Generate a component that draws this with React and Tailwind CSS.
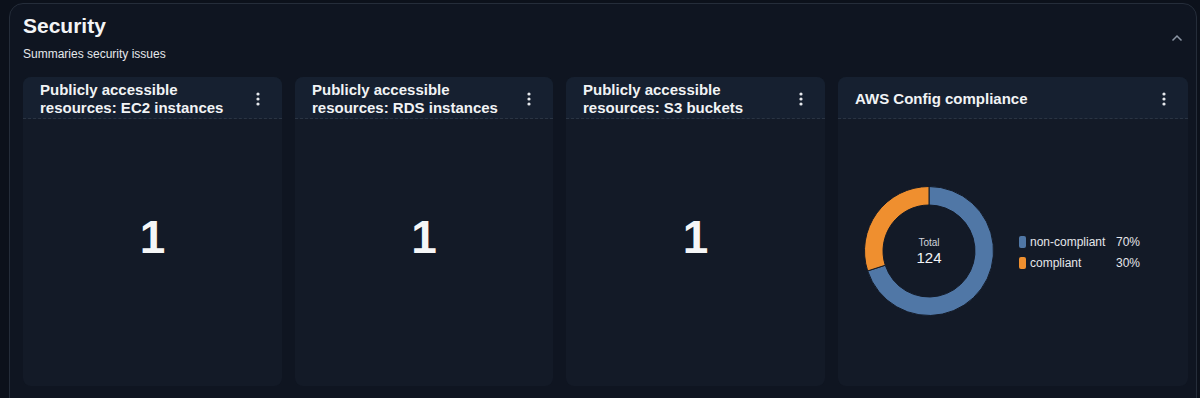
import React from "react";

function Dots() {
  return (
    <svg width="4" height="14" viewBox="0 0 4 14" className="shrink-0">
      <circle cx="2" cy="2" r="1.6" fill="#e5e7eb" />
      <circle cx="2" cy="7" r="1.6" fill="#e5e7eb" />
      <circle cx="2" cy="12" r="1.6" fill="#e5e7eb" />
    </svg>
  );
}

function Card({ title, children, className }) {
  return (
    <div className={"flex shrink-0 flex-col rounded-lg bg-[#131a27] overflow-hidden " + className}>
      <div className="flex h-[42px] shrink-0 items-center justify-between border-b border-dashed border-[#2a3443] bg-[#162030] pl-[17px] pr-[22px] pt-[2px]">
        <div className="text-[15px] font-bold leading-[18px] text-[#f1f3f5]">{title}</div>
        <Dots />
      </div>
      <div className="flex flex-1 items-center justify-center">{children}</div>
    </div>
  );
}

function Donut() {
  const cx = 65, cy = 65, R = 64.5, r = 46;
  const arc = (a0, a1, color) => {
    const p = (rad, a) => [cx + rad * Math.sin(a), cy - rad * Math.cos(a)];
    const [x0, y0] = p(R, a0);
    const [x1, y1] = p(R, a1);
    const [x2, y2] = p(r, a1);
    const [x3, y3] = p(r, a0);
    const large = a1 - a0 > Math.PI ? 1 : 0;
    return (
      <path
        d={`M${x0} ${y0} A${R} ${R} 0 ${large} 1 ${x1} ${y1} L${x2} ${y2} A${r} ${r} 0 ${large} 0 ${x3} ${y3} Z`}
        fill={color}
        stroke="#131a27"
        strokeWidth="1"
      />
    );
  };
  const split = 0.7 * 2 * Math.PI;
  return (
    <svg width="130" height="130" viewBox="0 0 130 130" className="shrink-0">
      {arc(0, split, "#5077a6")}
      {arc(split, 2 * Math.PI, "#ef8f2f")}
      <text x="65" y="60" textAnchor="middle" fill="#d1d5db" fontSize="10" fontFamily="Liberation Sans, Arial, sans-serif">Total</text>
      <text x="65" y="77" textAnchor="middle" fill="#f3f4f6" fontSize="15" fontFamily="Liberation Sans, Arial, sans-serif">124</text>
    </svg>
  );
}

export default function App() {
  return (
    <div className="h-[398px] w-[1200px] overflow-hidden bg-[#0c111b] pl-[9px] pr-[3px] pt-[3px]" style={{ fontFamily: "'Liberation Sans', Arial, sans-serif" }}>
      <div className="h-[420px] rounded-[14px] border border-[#252d3a] bg-[#0f1521] pl-[13px] pr-[9px]">
        <div className="flex items-start justify-between">
          <div>
            <div className="pt-[9px] text-[21px] font-bold leading-[26px] text-[#f3f4f6]">Security</div>
            <div className="mt-[8px] text-[12px] leading-[15px] text-[#e5e7eb]">Summaries security issues</div>
          </div>
          <svg width="12" height="8" viewBox="0 0 12 8" className="mr-[4px] mt-[30px]">
            <path d="M1.5 6.5 L6 2 L10.5 6.5" stroke="#8b95a3" strokeWidth="1.5" fill="none" />
          </svg>
        </div>
        <div className="mt-[15px] flex h-[309px] gap-[13px]">
          <Card className="w-[259px]" title={<>Publicly accessible<br />resources: EC2 instances</>}>
            <div className="mt-[-30px] text-[46px] font-bold text-[#f5f6f7]">1</div>
          </Card>
          <Card className="w-[258px]" title={<>Publicly accessible<br />resources: RDS instances</>}>
            <div className="mt-[-30px] text-[46px] font-bold text-[#f5f6f7]">1</div>
          </Card>
          <Card className="w-[259px]" title={<>Publicly accessible<br />resources: S3 buckets</>}>
            <div className="mt-[-30px] text-[46px] font-bold text-[#f5f6f7]">1</div>
          </Card>
          <Card className="w-[350px]" title="AWS Config compliance">
            <div className="mt-[-4px] flex w-full items-center pl-[26px]">
              <Donut />
              <div className="ml-[25px] mt-[4px] flex flex-col gap-[3px] text-[12px] leading-[18px] text-[#e5e7eb]">
                <div className="flex items-center">
                  <span className="h-[12px] w-[7px] rounded-[2px] bg-[#5077a6]" />
                  <span className="ml-[4px] w-[86px]">non-compliant</span>
                  <span>70%</span>
                </div>
                <div className="flex items-center">
                  <span className="h-[12px] w-[7px] rounded-[2px] bg-[#ef8f2f]" />
                  <span className="ml-[4px] w-[86px]">compliant</span>
                  <span>30%</span>
                </div>
              </div>
            </div>
          </Card>
        </div>
      </div>
    </div>
  );
}
